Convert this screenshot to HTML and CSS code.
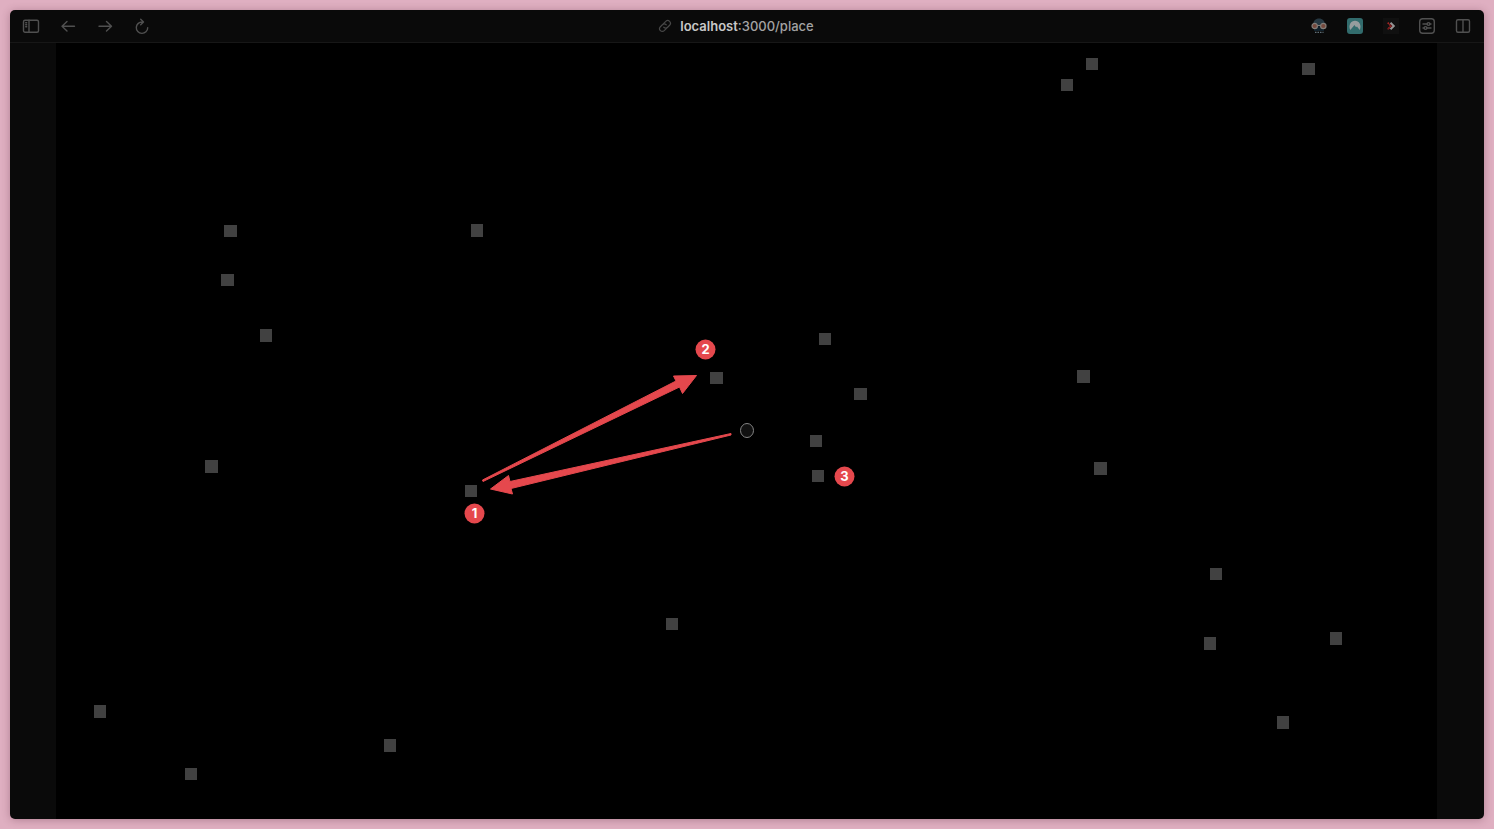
FILE: index.html
```html
<!DOCTYPE html>
<html lang="en">
<head>
<meta charset="utf-8">
<title>localhost:3000/place</title>
<link rel="stylesheet" href="styles.css">
</head>
<body>
<div class="window">
  <header class="toolbar">
    <nav class="group group-start" aria-label="Browser">
      <button class="tool" type="button" aria-label="Sidebar"><svg class="icon" viewBox="0 0 18 18"><rect x="1.500" y="3.200" width="15" height="12" rx="1.500"/><path d="M7 3.200v12M3.700 5.700h1M3.700 7.700h1M3.700 9.700h1"/></svg></button>
      <button class="tool" type="button" aria-label="Back"><svg class="icon" viewBox="0 0 18 18"><path d="M15.500 9.200H3.200M8 4.400L3 9.200l5 4.800"/></svg></button>
      <button class="tool" type="button" aria-label="Forward"><svg class="icon" viewBox="0 0 18 18"><path d="M3 9.200h12.300M10.500 4.400l5 4.800-5 4.800"/></svg></button>
      <button class="tool" type="button" aria-label="Reload"><svg class="icon" viewBox="0 0 18 18"><path d="M9.500 5a5.700 5.700 0 1 0 5.200 5.700M7.700 2.300L10.500 5 7.700 7.700"/></svg></button>
    </nav>
    <a class="address" href="#place">
      <svg class="link-icon" viewBox="0 0 14 14"><g transform="rotate(-45 7 7)"><path d="M7.500 9.700H3.200a2.700 2.700 0 0 1 0-5.400H6A2.700 2.700 0 0 1 8.700 7M6.500 4.300h4.300a2.700 2.700 0 0 1 0 5.400H8A2.700 2.700 0 0 1 5.300 7"/></g></svg>
      <span><strong class="host">localhost</strong>:3000/place</span>
    </a>
    <nav class="group group-end" aria-label="Extensions">
      <button class="tool" type="button" aria-label="Glasses"><svg class="art" viewBox="0 0 18 18"><path fill="#263842" d="M3 8c0-4 2.500-6.500 6-6.500S15 4 15 8v2H3z"/><path fill="#10202a" d="M4 9h10v5H4z"/><g fill="#75483c" stroke="#827c77" stroke-width="1.200"><circle cx="4.700" cy="9" r="2.700"/><circle cx="13.300" cy="9" r="2.700"/></g><path stroke="#827c77" d="M7.500 8.500h3"/><path stroke="#617079" stroke-width="1.200" stroke-dasharray="1.500 1" d="M5 15.300h8.500"/></svg></button>
      <button class="tool" type="button" aria-label="Mountain"><svg class="art" viewBox="0 0 18 18"><rect x="1" y="1" width="16" height="16" rx="3" fill="#326c6d"/><path fill="#969d9e" d="M4.300 13C2 8 5 3.700 9 3.700S16 8 13.700 13L11 9.500l-1 .8L8.500 8z"/></svg></button>
      <button class="tool" type="button" aria-label="Shortcut"><svg class="art" viewBox="0 0 18 18"><rect x="1" y="1" width="16" height="16" fill="#101010"/><path fill="none" stroke="#959595" stroke-width="2" d="M8.500 5.700L11.800 9l-3.300 3.300"/><path fill="none" stroke="#a12323" stroke-width="1.700" stroke-dasharray="1.700 .5" d="M5.700 5.700L9 9l-3.300 3.300"/></svg></button>
      <button class="tool" type="button" aria-label="Settings"><svg class="icon" viewBox="0 0 18 18"><rect x="1.700" y="1.700" width="14.600" height="14.600" rx="3"/><path d="M5 7h4M12 7h1M5 11h1M9 11h4"/><circle cx="10.500" cy="7" r="1.400"/><circle cx="7.500" cy="11" r="1.400"/></svg></button>
      <button class="tool" type="button" aria-label="Split view"><svg class="icon" viewBox="0 0 18 18"><rect x="2.500" y="2.700" width="13" height="12.600" rx="1.500"/><path d="M9 2.700v12.600"/></svg></button>
    </nav>
  </header>
  <main class="page" id="place">
    <svg class="board" viewBox="56 43 1381 776" role="img" aria-label="Place board">
      <g class="cells">
        <rect x="1086" y="58" width="12" height="12"/><rect x="1061" y="79" width="12" height="12"/><rect x="1302" y="63" width="13" height="12"/>
        <rect x="224" y="225" width="13" height="12"/><rect x="471" y="224" width="12" height="13"/><rect x="221" y="274" width="13" height="12"/>
        <rect x="260" y="329" width="12" height="13"/><rect x="819" y="333" width="12" height="12"/><rect x="710" y="372" width="13" height="12"/>
        <rect x="854" y="388" width="13" height="12"/><rect x="1077" y="370" width="13" height="13"/><rect x="810" y="435" width="12" height="12"/>
        <rect x="812" y="470" width="12" height="12"/><rect x="205" y="460" width="13" height="13"/><rect x="465" y="485" width="12" height="12"/>
        <rect x="1094" y="462" width="13" height="13"/><rect x="1210" y="568" width="12" height="12"/><rect x="666" y="618" width="12" height="12"/>
        <rect x="1204" y="637" width="12" height="13"/><rect x="1330" y="632" width="12" height="13"/><rect x="94" y="705" width="12" height="13"/>
        <rect x="384" y="739" width="12" height="13"/><rect x="1277" y="716" width="12" height="13"/><rect x="185" y="768" width="12" height="12"/>
      </g>
      <ellipse class="cursor" cx="747" cy="430.500" rx="6.500" ry="7"/>
      <g class="arrows">
        <path d="M482.500 480L676 381L673.500 376L696.500 375.500L682.500 393.500L679.500 387L483 481.500Z"/>
        <path d="M731 433.500L510 481.500L508.500 475.500L490.500 489L512.500 494L511 488.500L731 435Z"/>
      </g>
      <g class="badges">
        <circle cx="705.500" cy="349.500" r="10"/><text x="705.500" y="354">2</text>
        <circle cx="474.500" cy="513.500" r="10"/><text x="474.500" y="518">1</text>
        <circle cx="844.500" cy="476.500" r="10"/><text x="844.500" y="481">3</text>
      </g>
    </svg>
  </main>
</div>
</body>
</html>
```
FILE: styles.css
```css
* {
  box-sizing: border-box;
}

body {
  margin: 0;
  height: 100vh;
  padding: 10px;
  background: #dfafc1;
  font-family: Inter, "Liberation Sans", sans-serif;
}

.window {
  display: flex;
  flex-direction: column;
  height: 100%;
  overflow: hidden;
  border-radius: 5px;
  background: #0a0a0a;
  box-shadow: 0 1px 8px rgba(70, 20, 40, 0.3);
}

.toolbar {
  display: grid;
  grid-template-columns: 1fr auto 1fr;
  align-items: center;
  height: 33px;
  flex: none;
  padding: 0 12px;
  border-bottom: 1px solid #171717;
}

.group {
  display: flex;
  gap: 19px;
}

.group-end {
  justify-content: flex-end;
  gap: 18px;
}

.tool {
  display: flex;
  padding: 0;
  border: 0;
  background: none;
}

.icon,
.art {
  width: 18px;
  height: 18px;
}

.icon,
.link-icon {
  fill: none;
  stroke: #505050;
  stroke-width: 1.4;
  stroke-linecap: round;
  stroke-linejoin: round;
}

.address {
  display: flex;
  align-items: center;
  gap: 8px;
  padding-right: 22px;
  color: #a3a3a3;
  font-size: 13px;
  font-weight: 500;
  line-height: 18px;
  text-decoration: none;
}

.host {
  color: #c8c8c8;
  font-weight: 600;
}

.link-icon {
  width: 14px;
  height: 14px;
  stroke: #484848;
  stroke-width: 1.2;
}

.page {
  flex: 1;
  min-height: 0;
  padding: 0 47px 0 46px;
}

.board {
  display: block;
  width: 100%;
  height: 100%;
  background: #000;
}

.cells {
  fill: #414141;
}

.cursor {
  fill: #111;
  stroke: #858585;
}

.arrows {
  fill: #e5484d;
  stroke: #e5484d;
  stroke-linejoin: round;
}

.badges {
  fill: #e5484d;
}

.badges text {
  fill: #fff;
  font-size: 13px;
  font-weight: 700;
  text-anchor: middle;
}
```
